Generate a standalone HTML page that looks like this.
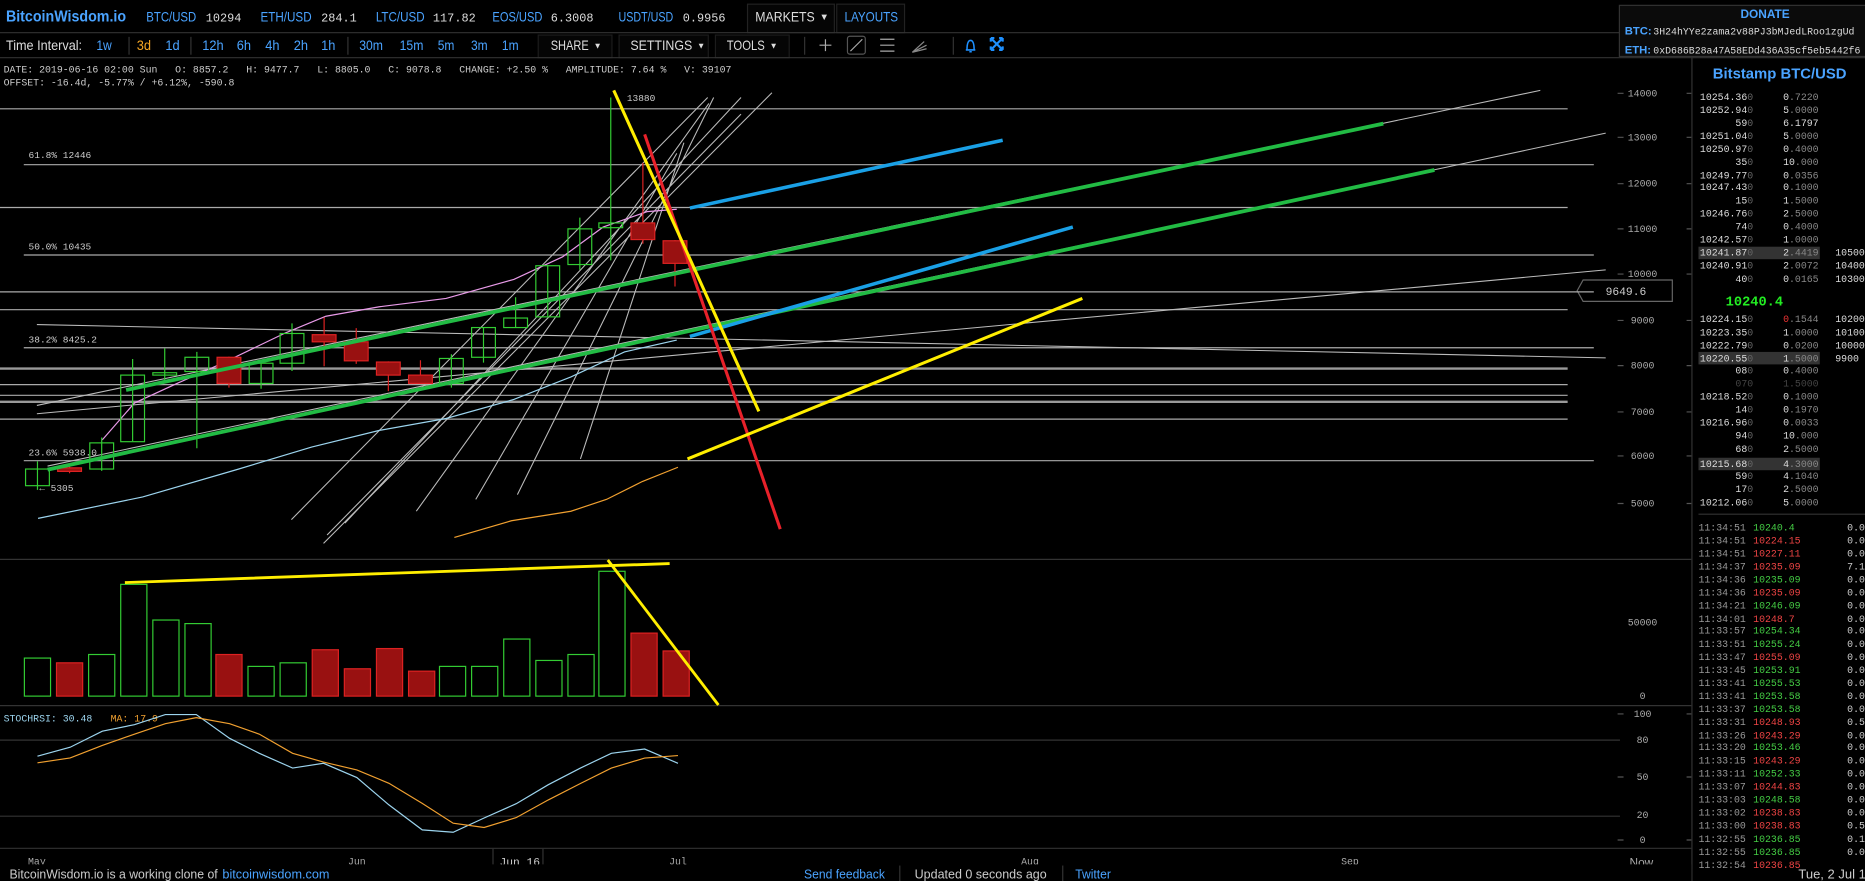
<!DOCTYPE html>
<html><head><meta charset="utf-8"><style>
html,body{margin:0;padding:0;background:#000;overflow:hidden}
svg{display:block}
.s{font-family:"Liberation Sans Narrow","Liberation Sans",sans-serif}
.m{font-family:"Liberation Mono",monospace}
</style></head><body>
<svg width="1865" height="881" viewBox="0 0 1568 741" preserveAspectRatio="none" xmlns="http://www.w3.org/2000/svg">
<rect width="1568" height="741" fill="#000"/>
<!-- top bar -->
<g class="s" font-size="11.5">
<text x="5" y="18" fill="#4aa3ff" font-weight="bold" font-size="13" font-family="Liberation Sans,sans-serif" textLength="101" lengthAdjust="spacingAndGlyphs">BitcoinWisdom.io</text>
<text x="123" y="18" fill="#4aa3ff" textLength="42" lengthAdjust="spacingAndGlyphs">BTC/USD</text><text x="173" y="18" fill="#ddd" class="m" font-size="10">10294</text>
<text x="219" y="18" fill="#4aa3ff" textLength="43" lengthAdjust="spacingAndGlyphs">ETH/USD</text><text x="270" y="18" fill="#ddd" class="m" font-size="10">284.1</text>
<text x="316" y="18" fill="#4aa3ff" textLength="41" lengthAdjust="spacingAndGlyphs">LTC/USD</text><text x="364" y="18" fill="#ddd" class="m" font-size="10">117.82</text>
<text x="414" y="18" fill="#4aa3ff" textLength="42" lengthAdjust="spacingAndGlyphs">EOS/USD</text><text x="463" y="18" fill="#ddd" class="m" font-size="10">6.3008</text>
<text x="520" y="18" fill="#4aa3ff" textLength="46" lengthAdjust="spacingAndGlyphs">USDT/USD</text><text x="574" y="18" fill="#ddd" class="m" font-size="10">0.9956</text>
<rect x="628.5" y="3.5" width="73" height="24" fill="#050505" stroke="#222"/>
<text x="635" y="18" fill="#ddd" textLength="50" lengthAdjust="spacingAndGlyphs">MARKETS</text><text x="689" y="17" fill="#ddd" font-size="8">▼</text>
<rect x="703.5" y="3.5" width="57" height="24" fill="#050505" stroke="#222"/>
<text x="710" y="18" fill="#4aa3ff" textLength="45" lengthAdjust="spacingAndGlyphs">LAYOUTS</text>
</g>
<line x1="0" y1="27.5" x2="1362" y2="27.5" stroke="#333"/>
<!-- donate -->
<rect x="1361.5" y="4.5" width="210" height="43" fill="#0b0b0b" stroke="#333"/>
<text x="1484" y="15" fill="#4aa3ff" font-weight="bold" font-size="10" text-anchor="middle" font-family="Liberation Sans,sans-serif">DONATE</text>
<text x="1366" y="29" fill="#4aa3ff" font-weight="bold" font-size="9.5" font-family="Liberation Sans,sans-serif">BTC:</text>
<text x="1390" y="29" fill="#ddd" font-size="8.3" class="m">3H24hYYe2zama2v88PJ3bMJedLRoo1zgUd</text>
<text x="1366" y="45" fill="#4aa3ff" font-weight="bold" font-size="9.5" font-family="Liberation Sans,sans-serif">ETH:</text>
<text x="1390" y="45" fill="#ddd" font-size="8.3" class="m">0xD686B28a47A58EDd436A35cf5eb5442f6</text>
<!-- toolbar -->
<g class="s" font-size="11.5">
<text x="5" y="42" fill="#ddd" textLength="64" lengthAdjust="spacingAndGlyphs">Time Interval:</text>
<text x="81" y="42" fill="#4aa3ff" textLength="13" lengthAdjust="spacingAndGlyphs">1w</text>
<line x1="108.5" y1="31" x2="108.5" y2="46" stroke="#333"/>
<text x="115" y="42" fill="#f5a623" textLength="12" lengthAdjust="spacingAndGlyphs">3d</text>
<text x="139" y="42" fill="#4aa3ff" textLength="12" lengthAdjust="spacingAndGlyphs">1d</text>
<line x1="160.5" y1="31" x2="160.5" y2="46" stroke="#333"/>
<text x="170" y="42" fill="#4aa3ff" textLength="18" lengthAdjust="spacingAndGlyphs">12h</text>
<text x="199" y="42" fill="#4aa3ff" textLength="12" lengthAdjust="spacingAndGlyphs">6h</text>
<text x="223" y="42" fill="#4aa3ff" textLength="12" lengthAdjust="spacingAndGlyphs">4h</text>
<text x="247" y="42" fill="#4aa3ff" textLength="12" lengthAdjust="spacingAndGlyphs">2h</text>
<text x="270" y="42" fill="#4aa3ff" textLength="12" lengthAdjust="spacingAndGlyphs">1h</text>
<line x1="292.5" y1="31" x2="292.5" y2="46" stroke="#333"/>
<text x="302" y="42" fill="#4aa3ff" textLength="20" lengthAdjust="spacingAndGlyphs">30m</text>
<text x="336" y="42" fill="#4aa3ff" textLength="20" lengthAdjust="spacingAndGlyphs">15m</text>
<text x="368" y="42" fill="#4aa3ff" textLength="14" lengthAdjust="spacingAndGlyphs">5m</text>
<text x="396" y="42" fill="#4aa3ff" textLength="14" lengthAdjust="spacingAndGlyphs">3m</text>
<text x="422" y="42" fill="#4aa3ff" textLength="14" lengthAdjust="spacingAndGlyphs">1m</text>
<rect x="452.5" y="29.5" width="62" height="19" fill="#050505" stroke="#1c1c1c"/>
<text x="463" y="42" fill="#ddd" textLength="32" lengthAdjust="spacingAndGlyphs">SHARE</text><text x="499" y="41" fill="#ddd" font-size="7">▼</text>
<rect x="520.5" y="29.5" width="75" height="19" fill="#050505" stroke="#1c1c1c"/>
<text x="530" y="42" fill="#ddd" textLength="52" lengthAdjust="spacingAndGlyphs">SETTINGS</text><text x="586" y="41" fill="#ddd" font-size="7">▼</text>
<rect x="601.5" y="29.5" width="62" height="19" fill="#050505" stroke="#1c1c1c"/>
<text x="611" y="42" fill="#ddd" textLength="32" lengthAdjust="spacingAndGlyphs">TOOLS</text><text x="647" y="41" fill="#ddd" font-size="7">▼</text>
</g>
<line x1="676.5" y1="31" x2="676.5" y2="46" stroke="#333"/>
<path d="M694 33v10M689 38h10" stroke="#aaa"/>
<rect x="712.5" y="30.5" width="15" height="15" rx="2" fill="none" stroke="#555"/>
<path d="M715 43l10-10" stroke="#aaa"/>
<path d="M740 33h12M740 38h12M740 43h12" stroke="#aaa"/>
<path d="M767 44l10-9M767 44l12-6M767 44l12-3" stroke="#888"/>
<line x1="801.5" y1="31" x2="801.5" y2="46" stroke="#333"/>
<path d="M812 42h8M813 42c0-2 0-8 3-8s3 6 3 8M815 43.5h2" stroke="#1e90ff" stroke-width="1.3" fill="none"/>
<path d="M834 33l8 8M842 33l-8 8M833 32h3M833 32v3M843 32h-3M843 32v3M833 42h3M833 42v-3M843 42h-3M843 42v-3" stroke="#1e90ff" stroke-width="1.8"/>
<line x1="0" y1="48.5" x2="1568" y2="48.5" stroke="#333"/>
<!-- info -->
<g class="m" font-size="8.3" fill="#ccc">
<text x="3" y="61" xml:space="preserve">DATE: 2019-06-16 02:00 Sun   O: 8857.2   H: 9477.7   L: 8805.0   C: 9078.8   CHANGE: +2.50 %   AMPLITUDE: 7.64 %   V: 39107</text>
<text x="3" y="72">OFFSET: -16.4d, -5.77% / +6.12%, -590.8</text>
</g>
<!-- panel borders -->
<line x1="1422.5" y1="48" x2="1422.5" y2="741" stroke="#333"/>
<line x1="0" y1="470.5" x2="1422" y2="470.5" stroke="#333"/>
<line x1="0" y1="593.5" x2="1422" y2="593.5" stroke="#333"/>
<line x1="0" y1="713.5" x2="1422" y2="713.5" stroke="#333"/>
<line x1="0" y1="622.5" x2="1362" y2="622.5" stroke="#333"/>
<line x1="0" y1="686.5" x2="1362" y2="686.5" stroke="#333"/>
<!-- price axis -->
<g class="m" font-size="8.3" fill="#aaa" text-anchor="middle">
<text x="1381" y="81">14000</text><text x="1381" y="118">13000</text><text x="1381" y="157">12000</text><text x="1381" y="195">11000</text><text x="1381" y="233">10000</text><text x="1381" y="272">9000</text><text x="1381" y="310">8000</text><text x="1381" y="349">7000</text><text x="1381" y="386">6000</text><text x="1381" y="426">5000</text>
<text x="1381" y="526">50000</text><text x="1381" y="588">0</text>
<text x="1381" y="603">100</text><text x="1381" y="625">80</text><text x="1381" y="656">50</text><text x="1381" y="688">20</text><text x="1381" y="709">0</text>
</g>
<g stroke="#555">
<path d="M1360 78.5h5M1418 78.5h4M1360 115.5h5M1418 115.5h4M1360 154.5h5M1418 154.5h4M1360 192.5h5M1418 192.5h4M1360 230.5h5M1418 230.5h4M1360 269.5h5M1418 269.5h4M1360 307.5h5M1418 307.5h4M1360 346.5h5M1418 346.5h4M1360 383.5h5M1418 383.5h4M1360 423.5h5M1418 423.5h4M1360 600.5h5M1418 600.5h4M1360 653.5h5M1418 653.5h4M1360 706.5h5M1418 706.5h4"/>
</g>
<path d="M1331 235.5h75v18h-75l-5-9z" fill="#000" stroke="#666"/>
<text x="1367" y="248" class="m" font-size="9.5" fill="#ccc" text-anchor="middle">9649.6</text>
<!-- time axis -->
<g class="m" font-size="8.3" fill="#aaa" text-anchor="middle">
<text x="31" y="727">May</text><text x="300" y="727">Jun</text><text x="570" y="727">Jul</text><text x="866" y="727">Aug</text><text x="1135" y="727">Sep</text><text x="1380" y="729" class="s" font-size="10">Now</text>
<text x="437" y="728" font-size="9.5" fill="#ccc">Jun 16</text>
</g>
<path d="M414.5 714v22M456.5 714v22" stroke="#333"/>
<!-- horizontal user lines -->
<g stroke="#aaa" stroke-width="1">
<path d="M0 91.5H1318M20 138.5H1340M0 174.5H1318M20 214.5H1340M0 245.5H1340M0 260.5H1318M20 292.5H1340M0 323.5H1318M0 332.5H1318M0 352.5H1318M20 387.5H1340"/>
<path d="M0 310H1318M0 338H1318" stroke-width="2" stroke="#999"/>
</g>
<g class="m" font-size="8" fill="#ccc">
<text x="24" y="133">61.8% 12446</text><text x="24" y="210">50.0% 10435</text><text x="24" y="288">38.2% 8425.2</text><text x="24" y="383">23.6% 5938.0</text>
<text x="527" y="85">13880</text><text x="33" y="413">← 5305</text>
</g>
<!-- slanted gray lines -->
<g stroke="#bbb" stroke-width="0.9" fill="none">
<path d="M31 341L1295 76M31 348L1350 227M40 392L1350 112M31 273L1350 301"/>
<path d="M245 437L595 82M272 457L649 78M275 450L623 96M290 440L623 82M350 430L596 87M435 416L600 82M488 386L575 120M400 420L569 129"/>
</g>
<!-- MAs -->
<polyline fill="none" stroke="#9cd4ee" stroke-width="1" points="32,436 120,418 199,395 262,376 319,362 375,352 432,336 480,317 525,296 569,286"/>
<polyline fill="none" stroke="#e89ae8" stroke-width="1" points="86,370 113,339 150,322 188,305 240,280 274,266 319,258 375,251 432,235 473,216 507,191 544,178 569,176"/>
<polyline fill="none" stroke="#f0a030" stroke-width="1" points="382,452 430,438 480,430 510,420 540,405 570,393"/>
<!-- candles -->
<g stroke-width="1">
<g stroke="#3c3" fill="none">
<path d="M31.5 388V412M85.5 368V396M111.5 302V371M138.5 293V320M165.5 296V377M219.5 305V327M245.5 272V312M379.5 298V326M406.5 275V305M433.5 250V275M460.5 223V266M487.5 183V227M513.5 82V219"/>
<rect x="21.5" y="394.5" width="20" height="14"/><rect x="75.5" y="372.5" width="20" height="22"/><rect x="101.5" y="315.5" width="20" height="56"/><rect x="128.5" y="313.5" width="20" height="2"/><rect x="155.5" y="300.5" width="20" height="12"/><rect x="209.5" y="305.5" width="20" height="17"/><rect x="235.5" y="280.5" width="20" height="25"/><rect x="369.5" y="301.5" width="20" height="21"/><rect x="396.5" y="275.5" width="20" height="25"/><rect x="423.5" y="267.5" width="20" height="8"/><rect x="450.5" y="223.5" width="20" height="43"/><rect x="477.5" y="192.5" width="20" height="30"/><rect x="503.5" y="187.5" width="20" height="4"/>
</g>
<g stroke="#d22" fill="#991111">
<path d="M58.5 390V398M192.5 300V326M272.5 267V308M299.5 276V306M326.5 304V329M353.5 303V322M540.5 137V205M567.5 202V241"/>
<rect x="48.5" y="393.5" width="20" height="3"/><rect x="182.5" y="300.5" width="20" height="22"/><rect x="262.5" y="281.5" width="20" height="6"/><rect x="289.5" y="287.5" width="20" height="16"/><rect x="316.5" y="304.5" width="20" height="11"/><rect x="343.5" y="315.5" width="20" height="7"/><rect x="530.5" y="187.5" width="20" height="14"/><rect x="557.5" y="202.5" width="20" height="19"/>
</g>
</g>
<!-- drawn thick lines -->
<path d="M106 328L1163 104M40 395L1206 143" stroke="#22bb44" stroke-width="3.2"/>
<path d="M580 175L843 118M580 283L902 191" stroke="#1aa0e6" stroke-width="3"/>
<path d="M542 113L656 445" stroke="#e8212a" stroke-width="2.6"/>
<path d="M516 76L638 346M578 386L910 251" stroke="#ffee00" stroke-width="2.6"/>
<!-- volume -->
<g stroke="#3c3" fill="none">
<rect x="20.5" y="553.5" width="22" height="32"/><rect x="74.5" y="550.5" width="22" height="35"/><rect x="101.5" y="491.5" width="22" height="94"/><rect x="128.5" y="521.5" width="22" height="64"/><rect x="155.5" y="524.5" width="22" height="61"/><rect x="208.5" y="560.5" width="22" height="25"/><rect x="235.5" y="557.5" width="22" height="28"/><rect x="369.5" y="560.5" width="22" height="25"/><rect x="396.5" y="560.5" width="22" height="25"/><rect x="423.5" y="537.5" width="22" height="48"/><rect x="450.5" y="555.5" width="22" height="30"/><rect x="477.5" y="550.5" width="22" height="35"/><rect x="503.5" y="480.5" width="22" height="105"/>
</g>
<g stroke="#d22" fill="#991111">
<rect x="47.5" y="557.5" width="22" height="28"/><rect x="181.5" y="550.5" width="22" height="35"/><rect x="262.5" y="546.5" width="22" height="39"/><rect x="289.5" y="562.5" width="22" height="23"/><rect x="316.5" y="545.5" width="22" height="40"/><rect x="343.5" y="564.5" width="22" height="21"/><rect x="530.5" y="532.5" width="22" height="53"/><rect x="557.5" y="547.5" width="22" height="38"/>
</g>
<path d="M105 490L563 474M511 471L604 593" stroke="#ffee00" stroke-width="2.4"/>
<!-- stoch -->
<text x="3" y="607" class="m" font-size="8.3" fill="#9cd4ee">STOCHRSI: 30.48</text>
<text x="93" y="607" class="m" font-size="8.3" fill="#f0a030">MA: 17.9</text>
<polyline fill="none" stroke="#9cd4ee" stroke-width="1" points="31.5,636 59,628.5 86,615 113,609.5 139,601 165,601 193,621 218,633.6 246,646 272,642 300,654 327,677 355,698 381,700 407,688 434,676 461,660 488,646 514,633.6 542,630 570,642"/>
<polyline fill="none" stroke="#f0a030" stroke-width="1" points="31.5,641.6 59,637.5 86,627 113,617.5 139,608.7 165,603.6 193,608.7 218,617.5 246,633.6 272,641 300,647.6 327,658.8 355,675.7 381,692.4 407,696 434,687.7 461,672.8 488,659 514,646 542,637.6 570,635.5"/>
<!-- right panel -->
<text x="1440" y="66" fill="#4aa3ff" font-weight="bold" font-size="12.5" font-family="Liberation Sans,sans-serif">Bitstamp BTC/USD</text>
<rect x="1428" y="207.5" width="102" height="10.5" fill="#333"/>
<rect x="1428" y="296" width="102" height="10.5" fill="#333"/>
<rect x="1428" y="385" width="102" height="10.5" fill="#333"/>
<g class="m" font-size="8.3" fill="#ddd">
<g text-anchor="end">
<text x="1474" y="84">10254.36<tspan fill="#666">0</tspan></text><text x="1474" y="95">10252.94<tspan fill="#666">0</tspan></text><text x="1474" y="106">59<tspan fill="#666">0</tspan></text><text x="1474" y="117">10251.04<tspan fill="#666">0</tspan></text><text x="1474" y="128">10250.97<tspan fill="#666">0</tspan></text><text x="1474" y="139">35<tspan fill="#666">0</tspan></text><text x="1474" y="150">10249.77<tspan fill="#666">0</tspan></text><text x="1474" y="160">10247.43<tspan fill="#666">0</tspan></text><text x="1474" y="171">15<tspan fill="#666">0</tspan></text><text x="1474" y="182">10246.76<tspan fill="#666">0</tspan></text><text x="1474" y="193">74<tspan fill="#666">0</tspan></text><text x="1474" y="204">10242.57<tspan fill="#666">0</tspan></text><text x="1474" y="215">10241.87<tspan fill="#666">0</tspan></text><text x="1474" y="226">10240.91<tspan fill="#666">0</tspan></text><text x="1474" y="237">40<tspan fill="#666">0</tspan></text>
<text x="1529" y="84">0<tspan fill="#888">.7220</tspan></text><text x="1529" y="95">5<tspan fill="#888">.0000</tspan></text><text x="1529" y="106">6.1797</text><text x="1529" y="117">5<tspan fill="#888">.0000</tspan></text><text x="1529" y="128">0<tspan fill="#888">.4000</tspan></text><text x="1529" y="139">10<tspan fill="#888">.000</tspan></text><text x="1529" y="150">0<tspan fill="#888">.0356</tspan></text><text x="1529" y="160">0<tspan fill="#888">.1000</tspan></text><text x="1529" y="171">1<tspan fill="#888">.5000</tspan></text><text x="1529" y="182">2<tspan fill="#888">.5000</tspan></text><text x="1529" y="193">0<tspan fill="#888">.4000</tspan></text><text x="1529" y="204">1<tspan fill="#888">.0000</tspan></text><text x="1529" y="215">2<tspan fill="#888">.4419</tspan></text><text x="1529" y="226">2<tspan fill="#888">.0072</tspan></text><text x="1529" y="237">0<tspan fill="#888">.0165</tspan></text>
<text x="1474" y="271">10224.15<tspan fill="#666">0</tspan></text><text x="1474" y="282">10223.35<tspan fill="#666">0</tspan></text><text x="1474" y="293">10222.79<tspan fill="#666">0</tspan></text><text x="1474" y="304">10220.55<tspan fill="#666">0</tspan></text><text x="1474" y="314">08<tspan fill="#666">0</tspan></text><text x="1474" y="325" fill="#444">070</text><text x="1474" y="336">10218.52<tspan fill="#666">0</tspan></text><text x="1474" y="347">14<tspan fill="#666">0</tspan></text><text x="1474" y="358">10216.96<tspan fill="#666">0</tspan></text><text x="1474" y="369">94<tspan fill="#666">0</tspan></text><text x="1474" y="380">68<tspan fill="#666">0</tspan></text><text x="1474" y="393">10215.68<tspan fill="#666">0</tspan></text><text x="1474" y="403">59<tspan fill="#666">0</tspan></text><text x="1474" y="414">17<tspan fill="#666">0</tspan></text><text x="1474" y="425">10212.06<tspan fill="#666">0</tspan></text>
<text x="1529" y="271"><tspan fill="#e33">0</tspan><tspan fill="#888">.1544</tspan></text><text x="1529" y="282">1<tspan fill="#888">.0000</tspan></text><text x="1529" y="293">0<tspan fill="#888">.0200</tspan></text><text x="1529" y="304">1<tspan fill="#888">.5000</tspan></text><text x="1529" y="314">0<tspan fill="#888">.4000</tspan></text><text x="1529" y="325" fill="#444">1.5000</text><text x="1529" y="336">0<tspan fill="#888">.1000</tspan></text><text x="1529" y="347">0<tspan fill="#888">.1970</tspan></text><text x="1529" y="358">0<tspan fill="#888">.0033</tspan></text><text x="1529" y="369">10<tspan fill="#888">.000</tspan></text><text x="1529" y="380">2<tspan fill="#888">.5000</tspan></text><text x="1529" y="393">4<tspan fill="#888">.3000</tspan></text><text x="1529" y="403">4<tspan fill="#888">.1040</tspan></text><text x="1529" y="414">2<tspan fill="#888">.5000</tspan></text><text x="1529" y="425">5<tspan fill="#888">.0000</tspan></text>
</g>
<text x="1543" y="215">10500</text><text x="1543" y="226">10400</text><text x="1543" y="237">10300</text>
<text x="1543" y="271">10200</text><text x="1543" y="282">10100</text><text x="1543" y="293">10000</text><text x="1543" y="304">9900</text>
</g>
<text x="1475" y="257" class="m" font-size="11.5" font-weight="bold" fill="#22ee22" text-anchor="middle">10240.4</text>
<line x1="1428" y1="432.5" x2="1568" y2="432.5" stroke="#333"/>
<g class="m" font-size="8.3">
<g fill="#999">
<text x="1428" y="446">11:34:51</text><text x="1428" y="457">11:34:51</text><text x="1428" y="468">11:34:51</text><text x="1428" y="479">11:34:37</text><text x="1428" y="490">11:34:36</text><text x="1428" y="501">11:34:36</text><text x="1428" y="512">11:34:21</text><text x="1428" y="523">11:34:01</text><text x="1428" y="533">11:33:57</text><text x="1428" y="544">11:33:51</text><text x="1428" y="555">11:33:47</text><text x="1428" y="566">11:33:45</text><text x="1428" y="577">11:33:41</text><text x="1428" y="588">11:33:41</text><text x="1428" y="599">11:33:37</text><text x="1428" y="610">11:33:31</text><text x="1428" y="621">11:33:26</text><text x="1428" y="631">11:33:20</text><text x="1428" y="642">11:33:15</text><text x="1428" y="653">11:33:11</text><text x="1428" y="664">11:33:07</text><text x="1428" y="675">11:33:03</text><text x="1428" y="686">11:33:02</text><text x="1428" y="697">11:33:00</text><text x="1428" y="708">11:32:55</text><text x="1428" y="719">11:32:55</text><text x="1428" y="730">11:32:54</text>
</g>
<text x="1474" y="446" fill="#44cc44">10240.4</text><text x="1474" y="457" fill="#ee4444">10224.15</text><text x="1474" y="468" fill="#ee4444">10227.11</text><text x="1474" y="479" fill="#ee4444">10235.09</text><text x="1474" y="490" fill="#44cc44">10235.09</text><text x="1474" y="501" fill="#ee4444">10235.09</text><text x="1474" y="512" fill="#44cc44">10246.09</text><text x="1474" y="523" fill="#ee4444">10248.7</text><text x="1474" y="533" fill="#44cc44">10254.34</text><text x="1474" y="544" fill="#44cc44">10255.24</text><text x="1474" y="555" fill="#ee4444">10255.09</text><text x="1474" y="566" fill="#44cc44">10253.91</text><text x="1474" y="577" fill="#44cc44">10255.53</text><text x="1474" y="588" fill="#44cc44">10253.58</text><text x="1474" y="599" fill="#44cc44">10253.58</text><text x="1474" y="610" fill="#ee4444">10248.93</text><text x="1474" y="621" fill="#ee4444">10243.29</text><text x="1474" y="631" fill="#44cc44">10253.46</text><text x="1474" y="642" fill="#ee4444">10243.29</text><text x="1474" y="653" fill="#44cc44">10252.33</text><text x="1474" y="664" fill="#ee4444">10244.83</text><text x="1474" y="675" fill="#44cc44">10248.58</text><text x="1474" y="686" fill="#ee4444">10238.83</text><text x="1474" y="697" fill="#ee4444">10238.83</text><text x="1474" y="708" fill="#44cc44">10236.85</text><text x="1474" y="719" fill="#44cc44">10236.85</text><text x="1474" y="730" fill="#ee4444">10236.85</text>
<g fill="#ccc">
<text x="1553" y="446">0.0</text><text x="1553" y="457">0.0</text><text x="1553" y="468">0.0</text><text x="1553" y="479">7.1</text><text x="1553" y="490">0.0</text><text x="1553" y="501">0.0</text><text x="1553" y="512">0.0</text><text x="1553" y="523">0.0</text><text x="1553" y="533">0.0</text><text x="1553" y="544">0.0</text><text x="1553" y="555">0.0</text><text x="1553" y="566">0.0</text><text x="1553" y="577">0.0</text><text x="1553" y="588">0.0</text><text x="1553" y="599">0.0</text><text x="1553" y="610">0.5</text><text x="1553" y="621">0.0</text><text x="1553" y="631">0.0</text><text x="1553" y="642">0.0</text><text x="1553" y="653">0.0</text><text x="1553" y="664">0.0</text><text x="1553" y="675">0.0</text><text x="1553" y="686">0.0</text><text x="1553" y="697">0.5</text><text x="1553" y="708">0.1</text><text x="1553" y="719">0.0</text>
</g>
</g>
<!-- footer -->
<rect x="0" y="727" width="1422" height="14" fill="#000"/>
<rect x="1423" y="731" width="145" height="10" fill="#000"/>
<g class="s" font-size="11">
<text x="8" y="739" fill="#ccc" textLength="175" lengthAdjust="spacingAndGlyphs">BitcoinWisdom.io is a working clone of</text>
<text x="187" y="739" fill="#4aa3ff" textLength="90" lengthAdjust="spacingAndGlyphs">bitcoinwisdom.com</text>
<text x="676" y="739" fill="#4aa3ff" textLength="68" lengthAdjust="spacingAndGlyphs">Send feedback</text>
<line x1="756.5" y1="728" x2="756.5" y2="741" stroke="#333"/>
<text x="769" y="739" fill="#ccc" textLength="111" lengthAdjust="spacingAndGlyphs">Updated 0 seconds ago</text>
<line x1="893.5" y1="728" x2="893.5" y2="741" stroke="#333"/>
<text x="904" y="739" fill="#4aa3ff" textLength="30" lengthAdjust="spacingAndGlyphs">Twitter</text>
<text x="1512" y="739" fill="#ccc" textLength="62" lengthAdjust="spacingAndGlyphs">Tue, 2 Jul 11</text>
</g>
</svg>
</body></html>
